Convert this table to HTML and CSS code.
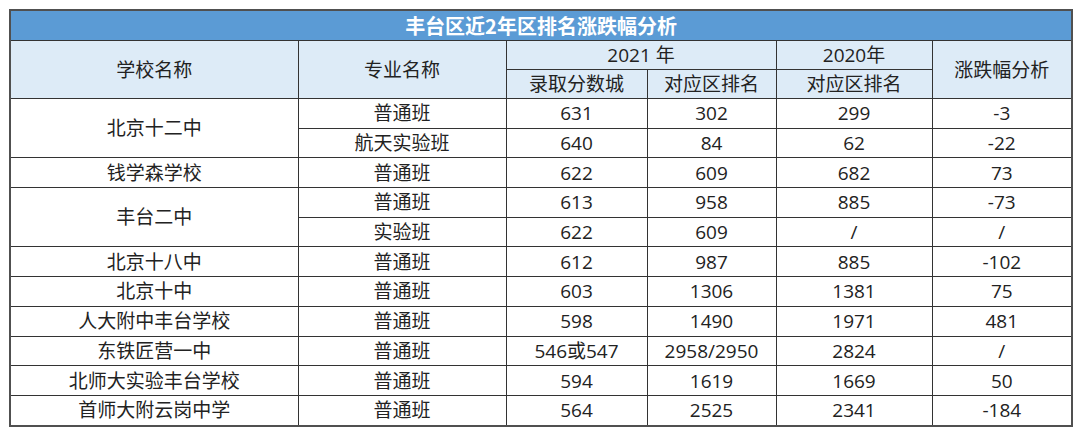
FILE: index.html
```html
<!DOCTYPE html>
<html lang="zh-CN">
<head>
<meta charset="utf-8">
<title>丰台区近2年区排名涨跌幅分析</title>
<link rel="stylesheet" href="styles.css">
</head>
<body>
<table class="rank">
  <colgroup>
    <col class="c-school"><col class="c-major"><col class="c-score"><col class="c-r21"><col class="c-r20"><col class="c-diff">
  </colgroup>
  <thead>
    <tr class="title-row"><th colspan="6">丰台区近2年区排名涨跌幅分析</th></tr>
    <tr class="head-row">
      <th rowspan="2">学校名称</th>
      <th rowspan="2">专业名称</th>
      <th colspan="2">2021 年</th>
      <th>2020年</th>
      <th rowspan="2">涨跌幅分析</th>
    </tr>
    <tr class="head-row">
      <th>录取分数城</th>
      <th>对应区排名</th>
      <th>对应区排名</th>
    </tr>
  </thead>
  <tbody>
    <tr><td rowspan="2">北京十二中</td><td>普通班</td><td>631</td><td>302</td><td>299</td><td>-3</td></tr>
    <tr><td>航天实验班</td><td>640</td><td>84</td><td>62</td><td>-22</td></tr>
    <tr><td>钱学森学校</td><td>普通班</td><td>622</td><td>609</td><td>682</td><td>73</td></tr>
    <tr><td rowspan="2">丰台二中</td><td>普通班</td><td>613</td><td>958</td><td>885</td><td>-73</td></tr>
    <tr><td>实验班</td><td>622</td><td>609</td><td>/</td><td>/</td></tr>
    <tr><td>北京十八中</td><td>普通班</td><td>612</td><td>987</td><td>885</td><td>-102</td></tr>
    <tr><td>北京十中</td><td>普通班</td><td>603</td><td>1306</td><td>1381</td><td>75</td></tr>
    <tr><td>人大附中丰台学校</td><td>普通班</td><td>598</td><td>1490</td><td>1971</td><td>481</td></tr>
    <tr><td>东铁匠营一中</td><td>普通班</td><td>546或547</td><td>2958/2950</td><td>2824</td><td>/</td></tr>
    <tr><td>北师大实验丰台学校</td><td>普通班</td><td>594</td><td>1619</td><td>1669</td><td>50</td></tr>
    <tr><td>首师大附云岗中学</td><td>普通班</td><td>564</td><td>2525</td><td>2341</td><td>-184</td></tr>
  </tbody>
</table>
</body>
</html>
```

FILE: styles.css
```css
html, body {
  margin: 0;
  padding: 0;
  background: #ffffff;
}
body {
  padding: 9px 0 0 9px;
  font-family: "Open Sans", "Noto Sans CJK SC", sans-serif;
  color: #222222;
}
.rank {
  border-collapse: collapse;
  table-layout: fixed;
  width: 1062px;
  border: 2px solid #505050;
}
.c-school { width: 288px; }
.c-major { width: 208px; }
.c-score { width: 141px; }
.c-r21 { width: 129px; }
.c-r20 { width: 156px; }
.c-diff { width: 140px; }
.rank th, .rank td {
  border: 1px solid #333333;
  padding: 0;
  text-align: center;
  vertical-align: middle;
  font-size: 19px;
  font-weight: normal;
  line-height: 22px;
  white-space: nowrap;
}
.title-row th {
  height: 29px;
  background: #5b9bd5;
  color: #ffffff;
  font-weight: bold;
  font-size: 20px;
  font-family: "Noto Sans CJK SC", sans-serif;
}
.head-row th {
  background: #ddebf7;
  height: 28px;
  color: #222222;
}
.rank tbody td {
  height: 28.7px;
}
```
